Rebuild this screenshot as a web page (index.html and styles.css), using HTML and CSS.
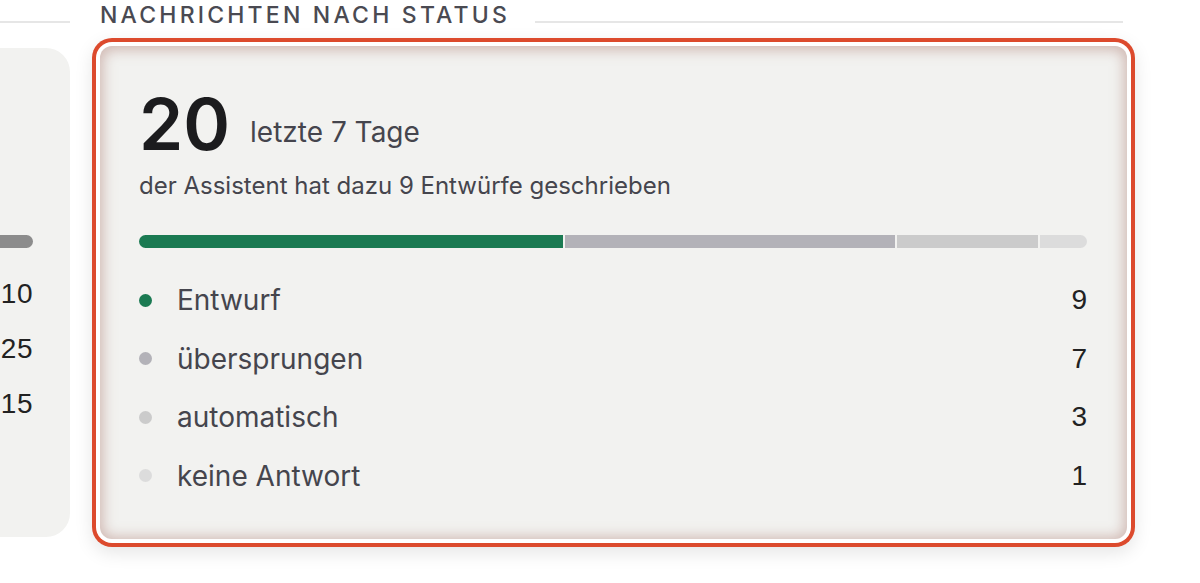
FILE: index.html
```html
<!DOCTYPE html>
<html lang="de">
<head>
    <meta charset="UTF-8">
    <meta name="viewport" content="width=device-width, initial-scale=1.0">
    <title>Nachrichten nach Status</title>
    <link rel="stylesheet" href="styles.css">
</head>
<body>
    <div class="board">
        <div class="col col-left">
            <div class="heading"><span class="rule"></span></div>
            <div class="card card-left">
                <div class="mini-bar"></div>
                <div class="mini-list">
                    <div class="mini-row">10</div>
                    <div class="mini-row">25</div>
                    <div class="mini-row">15</div>
                </div>
            </div>
        </div>

        <div class="col col-right">
            <div class="heading">
                <h2>Nachrichten nach Status</h2>
                <span class="rule"></span>
            </div>
            <div class="card card-status is-highlighted">
                <div class="total">
                    <span class="total-num">20</span>
                    <span class="total-range">letzte 7 Tage</span>
                </div>
                <p class="sub">der Assistent hat dazu 9 Entwürfe geschrieben</p>

                <div class="stack-bar">
                    <div class="seg seg-draft" style="flex: 9"></div>
                    <div class="seg seg-skip" style="flex: 7"></div>
                    <div class="seg seg-auto" style="flex: 3"></div>
                    <div class="seg seg-none" style="flex: 1"></div>
                </div>

                <ul class="legend">
                    <li><span class="dot seg-draft"></span><span class="label">Entwurf</span><span class="count">9</span></li>
                    <li><span class="dot seg-skip"></span><span class="label">übersprungen</span><span class="count">7</span></li>
                    <li><span class="dot seg-auto"></span><span class="label">automatisch</span><span class="count">3</span></li>
                    <li><span class="dot seg-none"></span><span class="label">keine Antwort</span><span class="count">1</span></li>
                </ul>
            </div>
        </div>
    </div>
</body>
</html>
```

FILE: styles.css
```css
body { margin: 0; padding-bottom: 44px; background: #fff; font-family: Inter, "Noto Sans", sans-serif; color: #45454d; }
.board { display: grid; grid-template-columns: 70px 1027px; column-gap: 30px; }
.col { display: flex; flex-direction: column; }

.heading { display: flex; align-items: center; height: 30px; gap: 25px; }
.heading h2 { margin: 0; font-size: 23px; font-weight: 500; letter-spacing: 3.2px; text-transform: uppercase; color: #4a4a52; line-height: 30px; white-space: nowrap; }
.rule { flex: 1; height: 2px; background: #e6e6e6; margin-top: 14px; }
.col-right .rule { margin-right: 4px; }

.card { background: #f2f2f0; border-radius: 12px; }
.card-left { margin-top: 18px; margin-left: -60px; height: 489px; border-radius: 24px; padding-top: 187px; box-sizing: border-box; padding-right: 37px; }
.mini-bar { height: 13px; background: #8c8c8c; border-radius: 0 7px 7px 0; }
.mini-list { margin-top: 31px; }
.mini-row { font-family: "Liberation Sans", Arial, sans-serif; font-size: 28px; color: #222; text-align: right; height: 55px; line-height: 30px; letter-spacing: 0.5px; }

.card-status { margin-top: 16px; height: 493px; box-sizing: border-box; padding: 38px 40px 0 39px; }
.is-highlighted {
    box-shadow:
        inset 0 1px 13px 3px rgba(175, 128, 118, 0.5),
        0 0 0 4px #fff,
        0 0 0 8px #dc4a2d,
        0 6px 18px 8px rgba(0, 0, 0, 0.10);
}

.total { display: flex; align-items: baseline; gap: 20px; }
.total-num { font-size: 71px; font-weight: 600; color: #1c1c1e; line-height: 80px; }
.total-range { font-size: 28px; color: #45454d; position: relative; top: -8px; }
.sub { margin: 7px 0 0; font-size: 24px; color: #45454d; line-height: 30px; }

.stack-bar { display: flex; gap: 2px; height: 13px; margin-top: 34px; border-radius: 7px; overflow: hidden; }
.seg-draft { background: #1b7a52; }
.seg-skip { background: #b3b2b8; }
.seg-auto { background: #cbcbcb; }
.seg-none { background: #dcdcdc; }

.legend { list-style: none; margin: 23px 0 0; padding: 0; }
.legend li { display: flex; align-items: center; height: 58.5px; }
.dot { width: 13px; height: 13px; border-radius: 50%; flex: none; }
.label { margin-left: 25px; font-size: 28px; color: #45454d; flex: 1; }
.count { font-family: "Liberation Sans", Arial, sans-serif; font-size: 28px; color: #222; }
```
